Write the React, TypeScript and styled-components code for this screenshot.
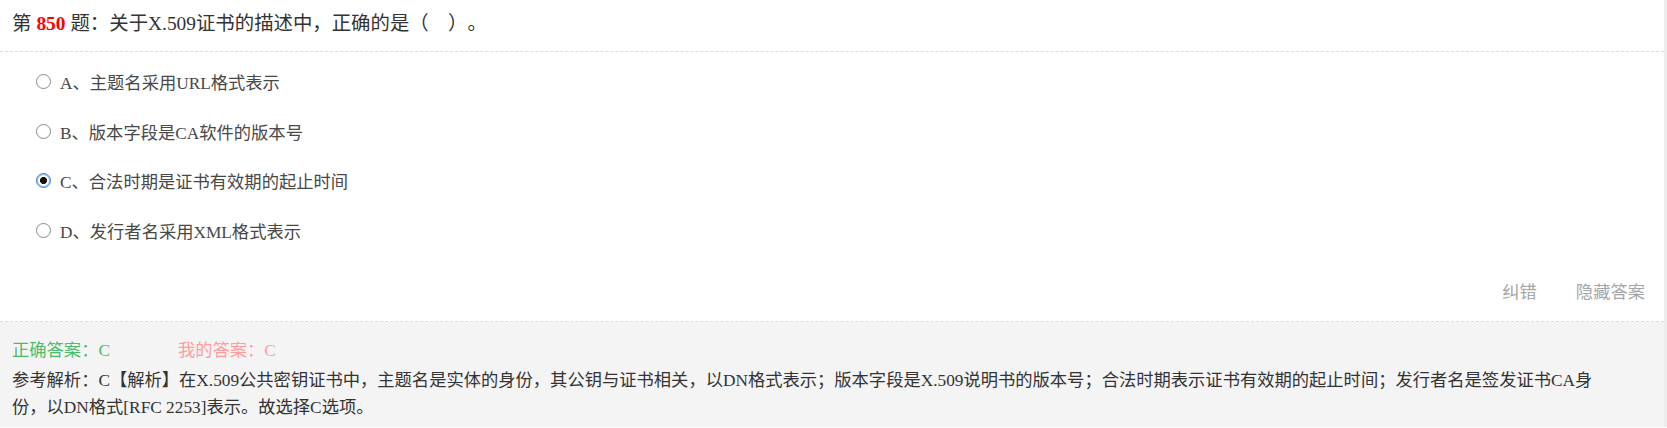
import React from "react";
import styled, { createGlobalStyle } from "styled-components";

const GlobalStyle = createGlobalStyle`
  html, body { margin: 0; padding: 0; background: #ffffff; }
  body {
    font-family: "Liberation Serif", "Noto Sans CJK SC", serif;
    color: #333333;
    text-spacing-trim: space-all;
    font-feature-settings: "chws" 0, "halt" 0, "palt" 0;
  }
  * { box-sizing: border-box; }
`;

const Page = styled.div`
  width: 1667px;
  border-right: 3px solid #ededed;
  display: flex;
  flex-direction: column;
`;

const Title = styled.div`
  height: 52px;
  padding: 0 12px 4px;
  display: flex;
  align-items: center;
  font-size: 19.4px;
  line-height: 24px;
  color: #333333;
  border-bottom: 1px dashed #dcdcdc;
  white-space: pre;
`;

const Num = styled.b`
  color: #ff0000;
  font-weight: bold;
  margin: 0 5px;
`;

const OptionList = styled.ul`
  list-style: none;
  margin: 0;
  padding: 5px 0 0 36px;
  display: flex;
  flex-direction: column;
`;

const OptionRow = styled.li`
  height: 49.5px;
  display: flex;
  align-items: center;
  gap: 9px;
  font-size: 17.3px;
  color: #484848;
`;

const Radio = styled.span<{ $checked?: boolean }>`
  width: 15px;
  height: 15px;
  border-radius: 50%;
  flex: none;
  border: 1px solid ${(p) => (p.$checked ? "#3d7fc4" : "#8a8a8a")};
  background: ${(p) =>
    p.$checked
      ? "radial-gradient(circle, #111 0 3.2px, #fff 3.8px)"
      : "#ffffff"};
  box-shadow: ${(p) => (p.$checked ? "inset 0 0 0 1px #7cb8ea" : "none")};
`;

const Actions = styled.div`
  height: 67px;
  display: flex;
  justify-content: flex-end;
  align-items: center;
  gap: 39px;
  padding: 4px 19px 0 0;
  font-size: 17.3px;
  color: #a6a6a6;
  font-family: "Noto Sans CJK SC", sans-serif;
  border-bottom: 1px dashed #dcdcdc;
`;

const Action = styled.span`
  cursor: pointer;
`;

const AnswerPanel = styled.div`
  background: #f4f4f4;
  height: 105px;
  padding: 15px 40px 0 12px;
  font-size: 17.3px;
`;

const AnswerLine = styled.div`
  display: flex;
  gap: 68px;
  line-height: 27px;
  margin-bottom: 3px;
`;

const Answer = styled.span<{ $tone: "right" | "mine" }>`
  color: ${(p) => (p.$tone === "right" ? "#4dbb6a" : "#ff9c9c")};
`;

const Analysis = styled.div`
  line-height: 27px;
  color: #333333;
`;

const options = [
  { key: "A", text: "主题名采用URL格式表示" },
  { key: "B", text: "版本字段是CA软件的版本号" },
  { key: "C", text: "合法时期是证书有效期的起止时间", checked: true },
  { key: "D", text: "发行者名采用XML格式表示" },
];

export default function App() {
  return (
    <>
      <GlobalStyle />
      <Page>
        <Title>
          第<Num>850</Num>题：关于X.509证书的描述中，正确的是（　）。
        </Title>
        <OptionList>
          {options.map((o) => (
            <OptionRow key={o.key}>
              <Radio $checked={o.checked} />
              <span>
                {o.key}、{o.text}
              </span>
            </OptionRow>
          ))}
        </OptionList>
        <Actions>
          <Action>纠错</Action>
          <Action>隐藏答案</Action>
        </Actions>
        <AnswerPanel>
          <AnswerLine>
            <Answer $tone="right">正确答案：C</Answer>
            <Answer $tone="mine">我的答案：C</Answer>
          </AnswerLine>
          <Analysis>
            参考解析：C【解析】在X.509公共密钥证书中，主题名是实体的身份，其公钥与证书相关，以DN格式表示；版本字段是X.509说明书的版本号；合法时期表示证书有效期的起止时间；发行者名是签发证书CA身份，以DN格式[RFC 2253]表示。故选择C选项。
          </Analysis>
        </AnswerPanel>
      </Page>
    </>
  );
}
